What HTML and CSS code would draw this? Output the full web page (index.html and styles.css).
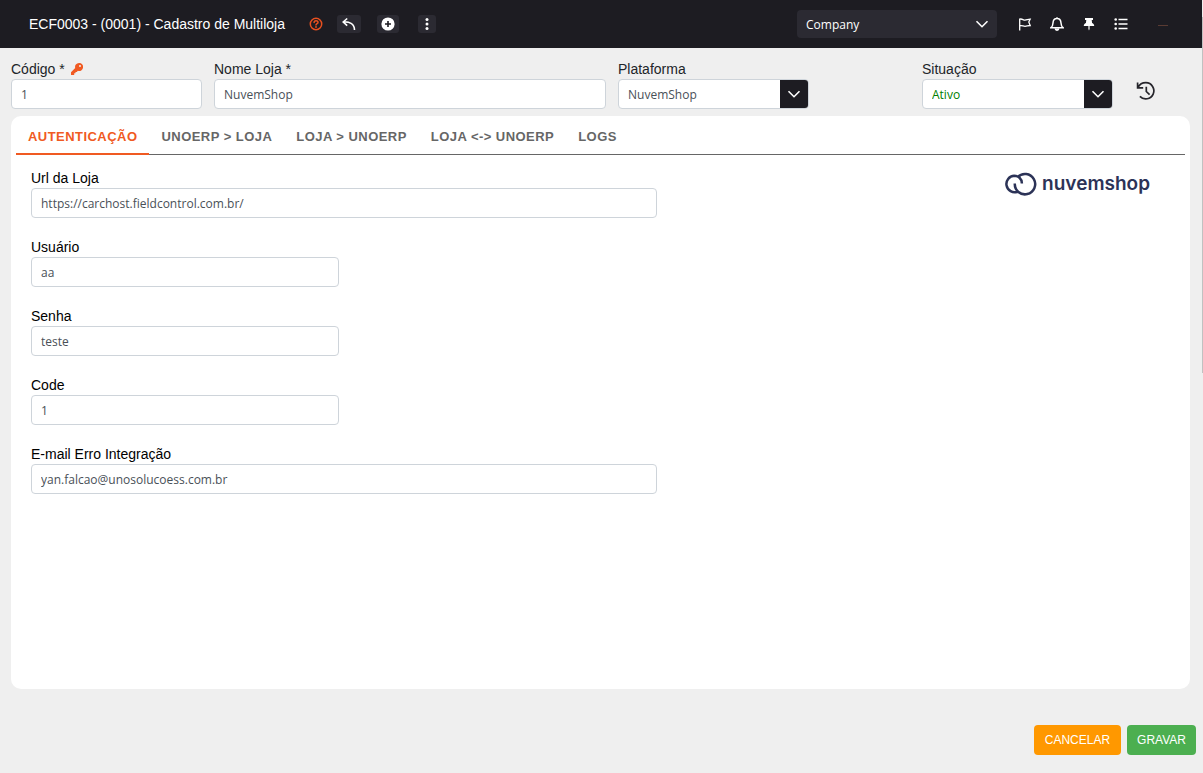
FILE: index.html
```
<!DOCTYPE html>
<html lang="pt-BR">
<head>
<meta charset="utf-8">
<title>ECF0003 - Cadastro de Multiloja</title>
<link rel="stylesheet" href="styles.css">
</head>
<body>
<header class="topbar">
  <h1 class="title">ECF0003 - (0001) - Cadastro de Multiloja</h1>
  <div class="tools">
    <button class="help" type="button" aria-label="Ajuda">
      <svg width="14" height="14" viewBox="0 0 14 14" fill="none" stroke="currentColor" stroke-width="1.500" stroke-linecap="round"><circle cx="7" cy="7" r="5.700"/><path d="M5.100 5.600c0-2.500 3.900-2.400 3.900-.2C9 6.700 7 6.700 7 8"/><circle cx="7" cy="10" r=".3"/></svg>
    </button>
    <button class="tool wide" type="button" aria-label="Voltar">
      <svg width="16" height="16" viewBox="0 0 16 16" fill="none" stroke="#fff" stroke-width="1.600"><path d="M6.200 2.500 2.200 6l4 3.700M2.500 6C8 5.500 13.500 7.500 13.500 14"/></svg>
    </button>
    <button class="tool" type="button" aria-label="Adicionar">
      <svg width="14" height="14" viewBox="0 0 14 14"><circle cx="7" cy="7" r="6.600" fill="#fff"/><path d="M7 4v6M4 7h6" stroke="#1d1c22" stroke-width="1.600"/></svg>
    </button>
    <button class="tool slim" type="button" aria-label="Mais opções">
      <svg width="4" height="14" viewBox="0 0 4 14" fill="#fff"><circle cx="2" cy="2.500" r="1.500"/><circle cx="2" cy="7" r="1.500"/><circle cx="2" cy="11.500" r="1.500"/></svg>
    </button>
  </div>
  <div class="company">
    <select aria-label="Empresa"><option>Company</option></select>
    <svg class="chev" width="14" height="14" viewBox="0 0 14 14"><path d="M1.500 4.200 7 9.700l5.500-5.500"/></svg>
  </div>
  <nav class="actions" aria-label="Ações">
    <button type="button" aria-label="Marcar"><svg width="14" height="14" viewBox="0 0 14 14" fill="none" stroke="currentColor" stroke-width="1.300"><path d="M1.700 13.500V1.500M1.700 2.200c2.500-.8 3.300.9 5.300.9 1.800 0 3-1 5.200-1l-1.400 3 1.400 3.400c-2.200 0-3.400.8-5.200.8-2 0-2.800-1.300-5.300-.5"/></svg></button>
    <button type="button" aria-label="Notificações"><svg width="14" height="14" viewBox="0 0 14 14" fill="none" stroke="currentColor" stroke-width="1.500"><path d="M1 10.700h12c-1.700-1.300-1.900-3-2-4.700C10.900 3.300 9.400 1.500 7 1.500S3.100 3.300 3 6c-.1 1.700-.3 3.400-2 4.700zM7 .2v1.500"/><path d="M5.200 11.500c.3 2.200 3.300 2.200 3.600 0" fill="currentColor"/></svg></button>
    <button type="button" aria-label="Fixar"><svg width="14" height="14" viewBox="0 0 14 14" fill="currentColor"><path d="M3 1h8v2H9.700l.4 3c1.400.7 2.100 1.600 2.100 3H7.600v3L7 13.500 6.400 12V9H1.800c0-1.400.7-2.300 2.100-3l.4-3H3z"/></svg></button>
    <button type="button" aria-label="Lista"><svg width="14" height="14" viewBox="0 0 14 14" fill="currentColor"><circle cx="1.700" cy="2.500" r="1.300"/><circle cx="1.700" cy="7" r="1.300"/><circle cx="1.700" cy="11.500" r="1.300"/><path d="M4.500 1.700H13.500v1.600H4.500zM4.500 6.200H13.500v1.600H4.500zM4.500 10.700H13.500v1.600H4.500z"/></svg></button>
    <button class="minimize" type="button" aria-label="Minimizar"><svg width="10" height="3" viewBox="0 0 10 3"><path d="M0 2.500h10" stroke="#593b33"/></svg></button>
  </nav>
</header>
<main>
  <form class="page" id="store">
    <div class="fields">
      <div class="field">
        <label for="codigo">Código *
          <svg class="key" width="12" height="12" viewBox="0 0 12 12"><path fill="#f05a22" fill-rule="evenodd" d="M8 0a4 4 0 1 1-1.100 7.800L5.800 9H4.500v1.300H3.200V12H.3a.3.300 0 0 1-.3-.3V9.200l4.200-4.100A4 4 0 0 1 8 0zm1 2a1 1 0 1 0 0 2 1 1 0 0 0 0-2z"/></svg>
        </label>
        <input id="codigo" type="text" value="1">
      </div>
      <div class="field">
        <label for="nome">Nome Loja *</label>
        <input id="nome" type="text" value="NuvemShop">
      </div>
      <div class="field">
        <label for="plataforma">Plataforma</label>
        <div class="select">
          <select id="plataforma"><option>NuvemShop</option></select>
          <span class="drop"><svg class="chev" width="14" height="14" viewBox="0 0 14 14"><path d="M1.500 4.200 7 9.700l5.500-5.500"/></svg></span>
        </div>
      </div>
      <div class="field status">
        <label for="situacao">Situação</label>
        <div class="select">
          <select id="situacao"><option>Ativo</option></select>
          <span class="drop"><svg class="chev" width="14" height="14" viewBox="0 0 14 14"><path d="M1.500 4.200 7 9.700l5.500-5.500"/></svg></span>
        </div>
      </div>
      <button class="history" type="button" aria-label="Histórico">
        <svg width="20" height="20" viewBox="0 0 20 20" fill="none" stroke="#26252b" stroke-width="1.700"><path d="M1.600 1.500v5.300h5.600M2 6.500C3.600 3.200 6.500 1.700 9.900 1.700a8.100 8.100 0 1 1-6 13.700M10.300 5.800v4.700l3.300 3.200"/></svg>
      </button>
    </div>
    <section class="panel">
      <div class="tabs" role="tablist">
        <button class="tab active" type="button" role="tab" aria-selected="true">AUTENTICAÇÃO</button>
        <button class="tab" type="button" role="tab">UNOERP &gt; LOJA</button>
        <button class="tab" type="button" role="tab">LOJA &gt; UNOERP</button>
        <button class="tab" type="button" role="tab">LOJA &lt;-&gt; UNOERP</button>
        <button class="tab" type="button" role="tab">LOGS</button>
      </div>
      <div class="content">
        <div class="stack">
          <div class="field long"><label for="url">Url da Loja</label><input id="url" type="text" value="https://carchost.fieldcontrol.com.br/"></div>
          <div class="field"><label for="usuario">Usuário</label><input id="usuario" type="text" value="aa"></div>
          <div class="field"><label for="senha">Senha</label><input id="senha" type="text" value="teste"></div>
          <div class="field"><label for="code">Code</label><input id="code" type="text" value="1"></div>
          <div class="field long"><label for="email">E-mail Erro Integração</label><input id="email" type="text" value="yan.falcao@unosolucoess.com.br"></div>
        </div>
        <div class="brand">
          <svg width="34" height="24" viewBox="0 0 34 24" fill="none" stroke="#2c3357" stroke-width="2.500"><path d="M10.800 11.500A10.200 10.200 0 1 0 13.600 5.100M17.900 11.500C17.900 6.500 14.200 3.800 10.200 3.800a8.200 8.200 0 1 0 3.200 15.900"/></svg>
          <span>nuvemshop</span>
        </div>
      </div>
    </section>
  </form>
</main>
<footer class="footer">
  <button class="btn cancel" type="reset" form="store">CANCELAR</button>
  <button class="btn save" type="submit" form="store">GRAVAR</button>
</footer>
<div class="scroll-thumb"></div>
</body>
</html>
```
FILE: styles.css
```
* {
  box-sizing: border-box;
}

body {
  margin: 0;
  min-height: 100vh;
  display: flex;
  flex-direction: column;
  background: #efefef;
  color: #212529;
  font: 14px/20px "Liberation Sans", Arial, sans-serif;
}

button {
  border: 0;
  padding: 0;
  background: none;
  color: inherit;
  font: inherit;
  cursor: pointer;
}

svg {
  display: block;
}

/* Top bar */
.topbar {
  display: flex;
  align-items: center;
  height: 48px;
  margin-right: 1px;
  padding: 0 34px 0 29px;
  background: #1d1c22;
  color: #fff;
}

.title {
  margin: 0;
  font-size: 14px;
  font-weight: 400;
}

.tools {
  display: flex;
  align-items: center;
  margin-left: 24px;
}

.help {
  margin-right: 14px;
  color: #e8501f;
}

.tool {
  display: grid;
  place-items: center;
  width: 22px;
  height: 18px;
  margin-right: 19px;
  border-radius: 3px;
  background: #2b2a32;
}

.tool.wide {
  width: 24px;
  margin-right: 16px;
}

.tool.slim {
  width: 18px;
}

.company {
  display: grid;
  align-items: center;
  width: 200px;
  margin-left: auto;
}

.company select,
.company .chev {
  grid-area: 1 / 1;
}

.company .chev {
  justify-self: end;
  margin-right: 8px;
  pointer-events: none;
}

.company select {
  height: 28px;
  border: 0;
  border-radius: 4px;
  background: #2b2a32;
  color: #fff;
  font-weight: 500;
}

.chev {
  fill: none;
  stroke: #fff;
  stroke-width: 1.6;
}

.actions {
  display: flex;
  align-items: center;
  gap: 18px;
  margin-left: 21px;
}

.minimize {
  margin-left: 12px;
}

/* Form controls */
input,
select {
  appearance: none;
  width: 100%;
  height: 30px;
  margin: 0;
  padding: 0 9px;
  border: 1px solid #ced4da;
  border-radius: 4px;
  background: #fff;
  color: #495057;
  font: 12px/18px "Open Sans", "Noto Sans", sans-serif;
}

select {
  padding-top: 2px;
}

label {
  display: flex;
  align-items: center;
  gap: 6px;
  height: 20px;
}

.select {
  display: grid;
}

.select select,
.drop {
  grid-area: 1 / 1;
}

.drop {
  display: grid;
  place-items: center;
  justify-self: end;
  width: 28px;
  margin: 1px;
  border-radius: 0 3px 3px 0;
  background: #1d1c22;
  pointer-events: none;
}

.status select {
  color: #008000;
}

/* Page */
main {
  flex: 1;
  display: flex;
  padding: 11px 13px 0 11px;
}

.page {
  flex: 1;
  display: flex;
  flex-direction: column;
}

.fields {
  display: grid;
  grid-template-columns: 191fr 392fr 191fr 89fr 191fr 65fr;
  gap: 12px;
}

.status {
  grid-column: 5;
}

.history {
  justify-self: start;
  align-self: end;
  margin: 0 0 8px 11px;
}

.panel {
  flex: 1;
  margin-top: 7px;
  padding: 0 5px;
  border-radius: 10px;
  background: #fff;
}

.tabs {
  display: flex;
  height: 39px;
  border-bottom: 1px solid #666;
}

.tab {
  height: 39px;
  padding: 5px 12px 0;
  border-bottom: 2px solid transparent;
  color: #666;
  font-size: 13px;
  font-weight: 700;
  letter-spacing: 0.035em;
}

.tab.active {
  border-color: #f05a22;
  color: #f05a22;
}

.content {
  display: grid;
  padding: 13px 15px 0;
  color: #000;
}

.stack,
.brand {
  grid-area: 1 / 1;
}

.stack {
  display: grid;
  gap: 19px;
}

.stack .field {
  width: 27%;
}

.stack .long {
  width: 55%;
}

.brand {
  display: flex;
  align-items: center;
  gap: 4px;
  justify-self: end;
  align-self: start;
  margin: 4px 20px 0 0;
  color: #2c3357;
  font: 600 19px/24px Inter, sans-serif;
}

/* Footer */
.footer {
  display: flex;
  justify-content: flex-end;
  gap: 6px;
  padding: 36px 7px 18px;
}

.btn {
  height: 30px;
  padding: 0 11px;
  border-radius: 4px;
  color: #fff;
  font-size: 12px;
}

.cancel {
  background: #ff9800;
}

.save {
  padding: 0 10px;
  background: #4caf50;
}

.scroll-thumb {
  position: fixed;
  top: 17px;
  right: 0;
  width: 1px;
  height: 46vh;
  background: #c1c1c1;
}
```
